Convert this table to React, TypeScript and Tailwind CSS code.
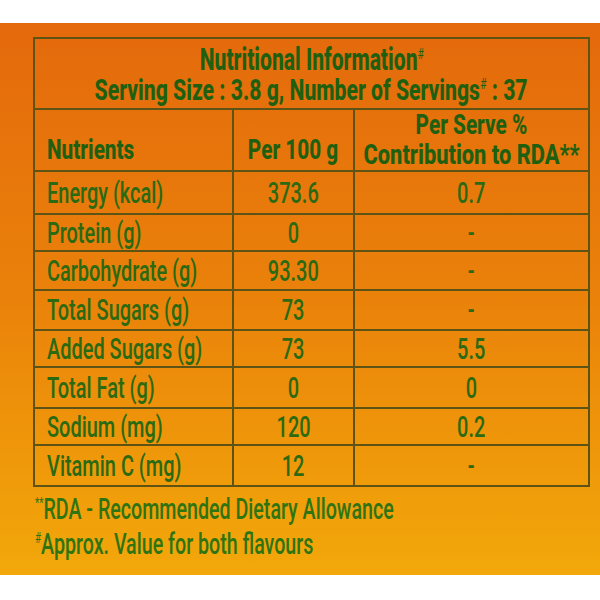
import React from "react";

const rows: [string, string, string, string][] = [
  ["Energy (kcal)", "373.6", "0.7", "h-[43px]"],
  ["Protein (g)", "0", "-", "h-[37px]"],
  ["Carbohydrate (g)", "93.30", "-", "h-[39px]"],
  ["Total Sugars (g)", "73", "-", "h-[40px]"],
  ["Added Sugars (g)", "73", "5.5", "h-[37px]"],
  ["Total Fat (g)", "0", "0", "h-[41px]"],
  ["Sodium (mg)", "120", "0.2", "h-[37px]"],
  ["Vitamin C (mg)", "12", "-", "h-[41px]"],
];

function L({ children }: { children: React.ReactNode }) {
  return (
    <span className="inline-block whitespace-nowrap origin-left scale-x-[0.665]">
      {children}
    </span>
  );
}

function C({ children }: { children: React.ReactNode }) {
  return (
    <span className="inline-block whitespace-nowrap origin-center scale-x-[0.665]">
      {children}
    </span>
  );
}

function HL({ children }: { children: React.ReactNode }) {
  return (
    <span className="inline-block whitespace-nowrap origin-left scale-x-[0.74]">
      {children}
    </span>
  );
}

function HC({ children }: { children: React.ReactNode }) {
  return (
    <span className="inline-block whitespace-nowrap origin-center scale-x-[0.74]">
      {children}
    </span>
  );
}

function Sup({ children }: { children: React.ReactNode }) {
  return <span className="relative -top-[11px] text-[15px] font-normal">{children}</span>;
}

export default function App() {
  return (
    <div className="w-[600px] h-[600px] bg-white pt-[23px] font-[family-name:Roboto,'Liberation_Sans',sans-serif]">
      <div className="h-[552px] bg-gradient-to-b from-[#e4690c] via-[#ea820a] to-[#f2a80a] pl-[33px] pt-[14px] text-[#2b6a12]">
        <div className="w-[557px] border-2 border-[#5c5314]">
          {/* title */}
          <div className="h-[69px] flex flex-col items-center justify-center font-extrabold text-[#1f6010] pt-[2px]">
            <div className="h-[30px] leading-[30px] text-[31px] flex justify-center">
              <span className="inline-block whitespace-nowrap origin-center scale-x-[0.68]">
                Nutritional Information<Sup>#</Sup>
              </span>
            </div>
            <div className="h-[30px] leading-[30px] text-[30px] flex justify-center">
              <span className="inline-block whitespace-nowrap origin-center scale-x-[0.705]">
                Serving Size : 3.8 g, Number of Servings<Sup>#</Sup> : 37
              </span>
            </div>
          </div>
          {/* header */}
          <div className="h-[62px] flex border-t-2 border-[#5c5314] font-extrabold text-[28px] leading-[30px] text-[#1f6010]">
            <div className="w-[197px] shrink-0 flex items-end pl-[12px] pb-[5px]">
              <HL>Nutrients</HL>
            </div>
            <div className="w-[121px] shrink-0 border-l-2 border-[#5c5314] flex items-end justify-center pb-[5px]">
              <HC>Per 100 g</HC>
            </div>
            <div className="flex-1 min-w-0 border-l-2 border-[#5c5314] flex flex-col items-center justify-center">
              <div className="flex justify-center h-[30px]">
                <HC>Per Serve %</HC>
              </div>
              <div className="flex justify-center h-[30px]">
                <span className="inline-block whitespace-nowrap origin-center scale-x-[0.78]">
                  Contribution to RDA**
                </span>
              </div>
            </div>
          </div>
          {rows.map(([n, a, b, h]) => (
            <div
              key={n}
              className={`${h} flex border-t-2 border-[#5c5314] text-[30px] leading-[30px] font-medium`}
            >
              <div className="w-[197px] shrink-0 flex items-center pl-[12px]">
                <L>{n}</L>
              </div>
              <div className="w-[121px] shrink-0 border-l-2 border-[#5c5314] flex items-center justify-center">
                <C>{a}</C>
              </div>
              <div className="flex-1 min-w-0 border-l-2 border-[#5c5314] flex items-center justify-center">
                <C>{b}</C>
              </div>
            </div>
          ))}
        </div>
        <div className="mt-[7px] pl-[2px] text-[30px] leading-[30px] font-medium text-[#2f7412]">
          <div>
            <span className="inline-block whitespace-nowrap origin-left scale-x-[0.655]">
              <Sup>**</Sup>RDA - Recommended Dietary Allowance
            </span>
          </div>
          <div>
            <span className="inline-block whitespace-nowrap origin-left scale-x-[0.655]">
              <Sup>#</Sup>Approx. Value for both flavours
            </span>
          </div>
        </div>
      </div>
    </div>
  );
}
